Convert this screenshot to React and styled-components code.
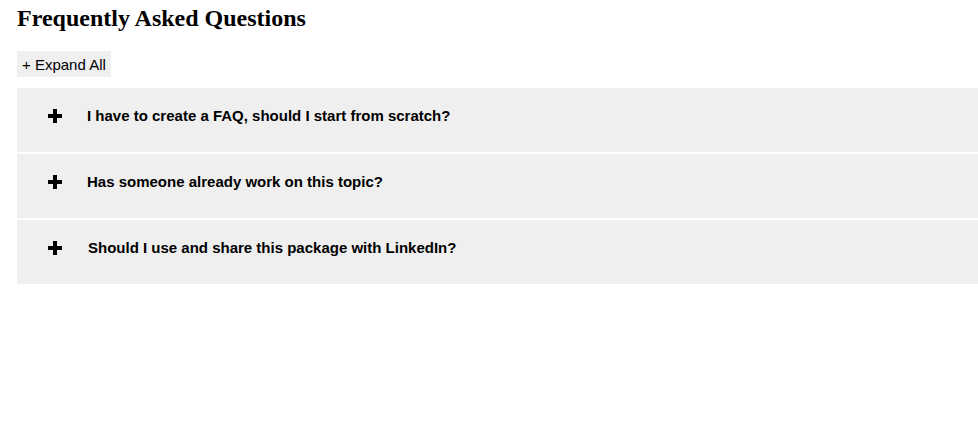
import React, { useState } from 'react'
import styled, { createGlobalStyle } from 'styled-components'

const questions = [
  {
    title: 'I have to create a FAQ, should I start from scratch?',
    content: 'No, you can reuse an existing package.'
  },
  {
    title: 'Has someone already work on this topic?',
    content: 'Yes, several packages already exist.'
  },
  {
    title: 'Should I use and share this package with LinkedIn?',
    content: 'Sure, share it with whoever you like.'
  }
]

function PlusIcon({ open }) {
  return (
    <Icon viewBox="0 0 14 14" aria-hidden="true">
      <rect x="0" y="5" width="14" height="4" fill="#000" />
      {!open && <rect x="5" y="0" width="4" height="14" fill="#000" />}
    </Icon>
  )
}

export default function App() {
  const [open, setOpen] = useState([])

  const toggle = (index) => {
    setOpen((old) => (old.includes(index) ? old.filter((i) => i !== index) : [...old, index]))
  }

  const expandAll = () => {
    setOpen(open.length === questions.length ? [] : questions.map((q, i) => i))
  }

  return (
    <>
      <GlobalStyle />
      <Page>
        <Title>Frequently Asked Questions</Title>
        <ExpandButton onClick={expandAll}>
          {open.length === questions.length ? '- Collapse All' : '+ Expand All'}
        </ExpandButton>
        <List>
          {questions.map((q, index) => (
            <Item key={index}>
              <Question onClick={() => toggle(index)}>
                <PlusIcon open={open.includes(index)} />
                <QuestionText $shift={index === 2}>{q.title}</QuestionText>
              </Question>
              {open.includes(index) && <Answer>{q.content}</Answer>}
            </Item>
          ))}
        </List>
      </Page>
    </>
  )
}

const GlobalStyle = createGlobalStyle`
  body {
    margin: 0;
    background: #fff;
    color: #000;
    font-family: "Liberation Sans", Arial, sans-serif;
  }
`

const Page = styled.div`
  padding: 5px 0 0 17px;
`

const Title = styled.h2`
  margin: 0 0 19px;
  font-family: "Liberation Serif", "Times New Roman", serif;
  font-size: 24px;
  font-weight: bold;
  line-height: 27px;
`

const ExpandButton = styled.button`
  display: block;
  height: 26px;
  padding: 0 5px;
  border: 0;
  background: #efefef;
  color: #000;
  font-family: "Liberation Sans", Arial, sans-serif;
  font-size: 15px;
  cursor: pointer;
`

const List = styled.div`
  margin-top: 11px;
  display: flex;
  flex-direction: column;
  gap: 2px;
`

const Item = styled.div`
  background: #efefef;
`

const Question = styled.div`
  display: flex;
  align-items: center;
  padding: 19px 0 28px 31px;
  line-height: 17px;
  cursor: pointer;
`

const Icon = styled.svg`
  width: 14px;
  height: 14px;
  flex: none;
`

const QuestionText = styled.span`
  margin-left: ${(p) => (p.$shift ? '26px' : '25px')};
  font-size: 15px;
  font-weight: bold;
`

const Answer = styled.div`
  padding: 0 30px 20px 87px;
  font-size: 15px;
`
